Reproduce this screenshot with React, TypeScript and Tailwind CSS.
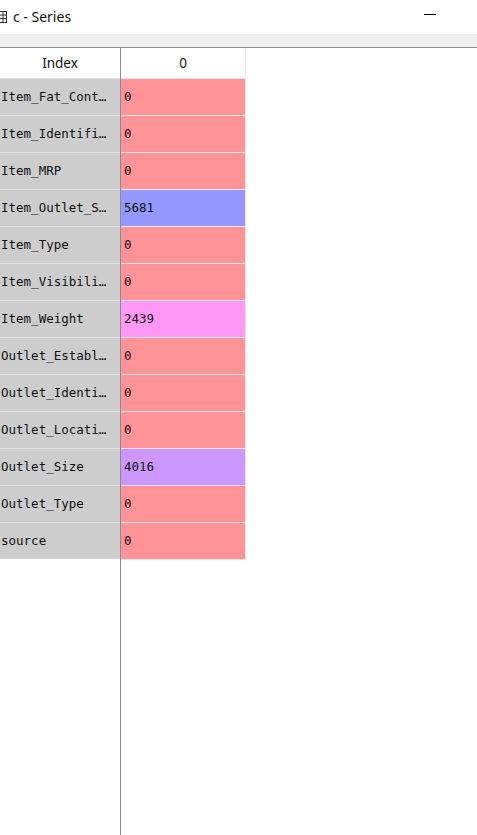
import React from "react";

const rows: { name: string; value: string; bg: string }[] = [
  { name: "Item_Fat_Cont…", value: "0", bg: "bg-[#ff9398]" },
  { name: "Item_Identifi…", value: "0", bg: "bg-[#ff9398]" },
  { name: "Item_MRP", value: "0", bg: "bg-[#ff9398]" },
  { name: "Item_Outlet_S…", value: "5681", bg: "bg-[#9598ff]" },
  { name: "Item_Type", value: "0", bg: "bg-[#ff9398]" },
  { name: "Item_Visibili…", value: "0", bg: "bg-[#ff9398]" },
  { name: "Item_Weight", value: "2439", bg: "bg-[#ff98f6]" },
  { name: "Outlet_Establ…", value: "0", bg: "bg-[#ff9398]" },
  { name: "Outlet_Identi…", value: "0", bg: "bg-[#ff9398]" },
  { name: "Outlet_Locati…", value: "0", bg: "bg-[#ff9398]" },
  { name: "Outlet_Size", value: "4016", bg: "bg-[#cc98ff]" },
  { name: "Outlet_Type", value: "0", bg: "bg-[#ff9398]" },
  { name: "source", value: "0", bg: "bg-[#ff9398]" },
];

const mono = { fontFamily: '"DejaVu Sans Mono", "Liberation Mono", monospace' };

export default function App() {
  return (
    <div className="w-[477px] h-[835px] bg-white overflow-hidden flex flex-col" style={{ fontFamily: '"Noto Sans", "Open Sans", sans-serif' }}>
      <div className="h-[34px] flex items-center relative shrink-0">
        <svg width="9" height="12" viewBox="0 0 9 12" className="ml-[-1px] mt-[-1px]">
          <rect x="0.5" y="0.5" width="7" height="11" fill="none" stroke="#333" />
          <line x1="0" y1="4" x2="8" y2="4" stroke="#333" />
          <line x1="0" y1="7.5" x2="8" y2="7.5" stroke="#333" />
          <line x1="4" y1="0" x2="4" y2="12" stroke="#333" />
        </svg>
        <span className="ml-[5px] text-[14px] text-[#111] mt-[-1px]">c - Series</span>
        <div className="absolute left-[424px] top-[14px] w-[12px] h-px bg-black" />
      </div>
      <div className="h-[13px] bg-[#efefef] shrink-0" />
      <div className="h-px bg-[#8b8b93] shrink-0" />
      <div className="flex flex-1">
        <div className="w-[120px] flex flex-col">
          <div className="h-[30px] flex items-center justify-center text-[13.5px] text-[#111]">Index</div>
          {rows.map((r) => (
            <div key={r.name} className="h-[37px] bg-[#cdcdcd] border-t border-[#e2e2e2] flex items-center pl-px text-[12.5px] text-[#111] whitespace-nowrap overflow-hidden" style={mono}>
              {r.name}
            </div>
          ))}
        </div>
        <div className="w-px bg-[#8a8a92]" />
        <div className="w-[125px] flex flex-col">
          <div className="h-[30px] flex items-center justify-center text-[13.5px] text-[#111] border-r border-[#e6e6e6]">0</div>
          {rows.map((r) => (
            <div key={r.name} className={`h-[37px] ${r.bg} border-t border-r border-[#e6e6e6] flex items-center pl-[3px] text-[12.5px] text-[#111]`} style={mono}>
              {r.value}
            </div>
          ))}
          <div className="h-px bg-[#e6e6e6]" />
        </div>
      </div>
    </div>
  );
}
